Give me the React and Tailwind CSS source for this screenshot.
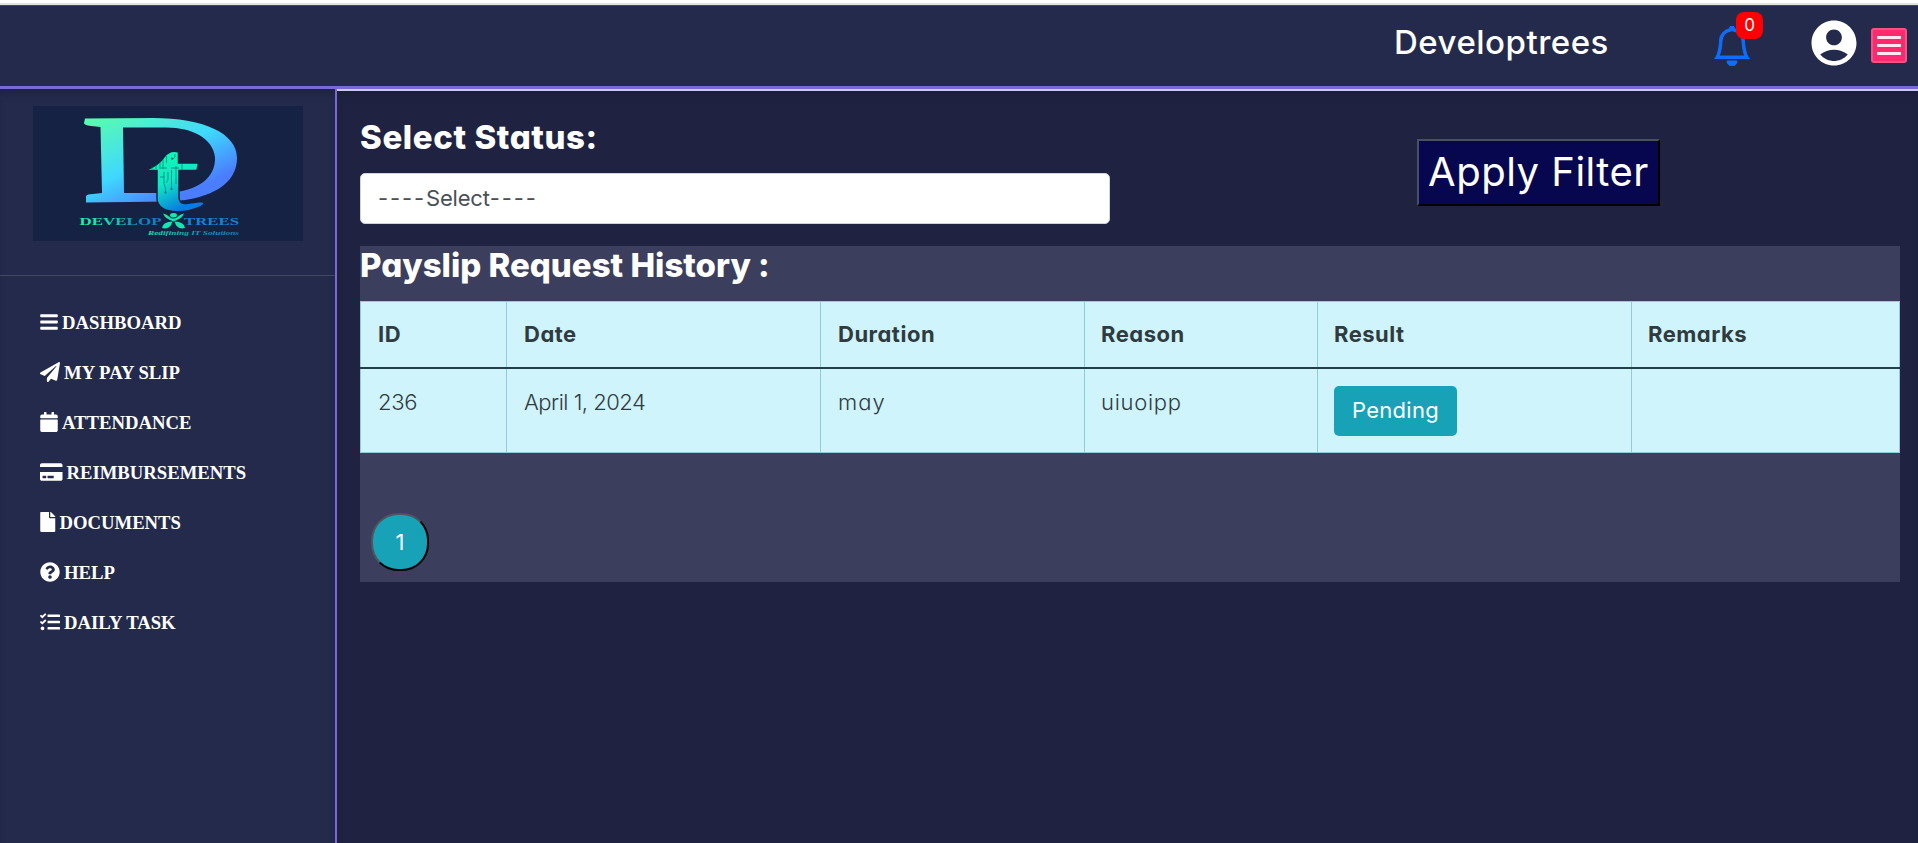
import { FaBars, FaPaperPlane, FaCalendar, FaCreditCard, FaFile, FaQuestionCircle, FaTasks } from "react-icons/fa";
import { BsBell } from "react-icons/bs";
import { MdAccountCircle } from "react-icons/md";

const MENU = [
  { icon: FaBars, label: "Dashboard", size: "w-[18px]" },
  { icon: FaPaperPlane, label: "My Pay Slip", size: "w-5" },
  { icon: FaCalendar, label: "Attendance", size: "w-[18px]" },
  { icon: FaCreditCard, label: "Reimbursements", size: "w-[22.5px]" },
  { icon: FaFile, label: "Documents", size: "w-[15.5px]" },
  { icon: FaQuestionCircle, label: "Help", size: "w-5" },
  { icon: FaTasks, label: "Daily Task", size: "w-5" },
];

function Logo() {
  return (
    <svg viewBox="0 0 270 135" className="h-[135px] w-[270px]">
      <defs>
        <linearGradient id="dGrad" x1="0" y1="0" x2="0.85" y2="1">
          <stop offset="0" stopColor="#5affa8" />
          <stop offset="0.5" stopColor="#3fd8ff" />
          <stop offset="0.85" stopColor="#4a7dff" />
          <stop offset="1" stopColor="#4a7dff" />
        </linearGradient>
        <linearGradient id="tGrad" x1="0" y1="0" x2="0.5" y2="1">
          <stop offset="0" stopColor="#10ffb0" />
          <stop offset="0.55" stopColor="#0fe8c4" />
          <stop offset="1" stopColor="#0a7be0" />
        </linearGradient>
        <linearGradient id="nameGrad" x1="0" y1="0" x2="1" y2="0">
          <stop offset="0" stopColor="#18f5a8" />
          <stop offset="0.4" stopColor="#19d3b0" />
          <stop offset="0.7" stopColor="#1a86b8" />
          <stop offset="1" stopColor="#1a78c0" />
        </linearGradient>
        <linearGradient id="tagGrad" x1="0" y1="0" x2="1" y2="0">
          <stop offset="0" stopColor="#18e8b0" />
          <stop offset="0.5" stopColor="#17a0b4" />
          <stop offset="1" stopColor="#1578b8" />
        </linearGradient>
      </defs>
      <rect width="270" height="135" fill="#152243" />
      <path
        fill="url(#dGrad)"
        fillRule="evenodd"
        d="M52 12.5 L120 12 C170 12 204 27 204 52 C204 77 180 93 137 95.500 L53 96.500 L53 90 Q54 88 60 88 L69 87 L67.500 21 L58 20 Q51 19 51 17 Z M90 21.500 L91 87 L135 87 C165 85 183 72 182 51 C180 32 158 21 132 21.500 Z"
      />
      <path
        fill="url(#tGrad)"
        stroke="#152243"
        strokeWidth="1.500"
        d="M112 64.500 Q126 59 131 51 Q137 43 145.500 46 L145.500 57 L165.500 57 L164 64.500 L146 64.500 L146 91 Q146 98 153 97.500 L168 95.500 Q174 97 168 100.500 C150 109 124 108 124 92 L124 64.500 Z"
      />
      <path
        fill="none"
        stroke="#0c5f6c"
        strokeWidth="0.600"
        d="M119 63 V60 M123 63 V58 M127 63 V56 M130 63 V53 M133.500 57 V50 M139 54 L142 51 V48 M128 62 H134 M138 62 H146 M127 71 H131 M131 66 V78 L132.500 82 V86 M135 66 V74 L133 77 M138.500 64 V82 M143 60 V78 M149 57 V64"
      />
      <circle cx="132.500" cy="86.500" r="0.900" fill="#0c5f6c" />
      <circle cx="138.500" cy="83" r="0.900" fill="#0c5f6c" />
      <circle cx="139" cy="52.500" r="0.900" fill="#0c5f6c" />
      <g fontFamily="'Liberation Serif', serif">
        <text x="46.500" y="119" fontSize="10.500" fontWeight="bold" textLength="82" lengthAdjust="spacingAndGlyphs" fill="url(#nameGrad)">DEVELOP</text>
        <text x="151" y="119" fontSize="10.500" fontWeight="bold" textLength="55" lengthAdjust="spacingAndGlyphs" fill="#1583cc">TREES</text>
        <text x="115" y="128.500" fontSize="6.500" fontStyle="italic" fontWeight="bold" textLength="91" lengthAdjust="spacingAndGlyphs" fill="url(#tagGrad)">Redifining IT Solutions</text>
      </g>
      <g fill="#12e8b4">
        <ellipse cx="140.500" cy="109.200" rx="3.400" ry="2.200" />
        <path d="M130 107.500 Q134 108 136.500 111 Q140.500 114 144.500 111 Q147 108 151 107.500 Q149 112 144 114 L140.500 115.500 L137 114 Q132 112 130 107.500 Z" />
        <path d="M139.500 115.500 Q130 115.500 129 122 Q137 124 139.500 115.500 Z" />
        <path d="M141.500 115.500 Q151 115.500 152 122 Q144 124 141.500 115.500 Z" />
      </g>
    </svg>
  );
}

const HEADERS = [
  { label: "ID", pad: "pl-[17px]" },
  { label: "Date", pad: "pl-[17px]" },
  { label: "Duration", pad: "pl-[17px]" },
  { label: "Reason", pad: "pl-4" },
  { label: "Result", pad: "pl-4" },
  { label: "Remarks", pad: "pl-4" },
];

const CELLS = [
  { value: "236", style: "pl-[17px] tracking-[-0.3px]" },
  { value: "April 1, 2024", style: "pl-[17px] tracking-[-0.5px]" },
  { value: "may", style: "pl-[17px] tracking-[1px]" },
  { value: "uiuoipp", style: "pl-4 tracking-[0.7px]" },
];

export default function App() {
  return (
    <div className="flex h-[843px] w-[1918px] flex-col overflow-hidden bg-[#1f2341] font-['Inter',sans-serif] text-white [font-feature-settings:'cv11']">
      <div className="h-[3px] shrink-0 bg-white" />
      <div className="h-[2px] shrink-0 bg-[#dfe2df]" />
      <header className="flex h-[84px] shrink-0 items-start border-t border-b-[3px] border-t-[#3d4a57] border-b-[#7a68d6] bg-[#242a4b]">
        <div className="ml-[1394px] mt-[16px] w-[320px] whitespace-nowrap text-[33px] leading-[40px] font-medium tracking-[0.5px]">Developtrees</div>
        <div className="relative mt-[20px] w-[97px]">
          <BsBell className="-ml-[2.5px] h-10 w-10 stroke-[#0d6efd] stroke-[0.4] text-[#0d6efd]" preserveAspectRatio="none" />
          <span className="absolute -top-[14px] left-[22px] flex h-[27px] w-[27px] items-center justify-center rounded-[8px] bg-[#ff0000] text-[17px] leading-none">0</span>
        </div>
        <MdAccountCircle className="-ml-[4px] mt-[10px] size-[54px]" />
        <button className="ml-[10px] mt-[22px] flex h-[35px] w-9 flex-col items-center justify-center gap-[5px] rounded-[3px] border-2 border-[#f5508a] bg-[#ff2a6d]">
          <span className="h-[3px] w-6 bg-[#ffe6f0]" />
          <span className="h-[3px] w-6 bg-[#ffe6f0]" />
          <span className="h-[3px] w-6 bg-[#ffe6f0]" />
        </button>
      </header>
      <div className="flex min-h-0 flex-1">
        <aside className="w-[337px] shrink-0 border-r-2 border-[#7a68d6] bg-[#242a4b] shadow-[inset_0_7px_8px_-4px_#1d2142]">
          <div className="h-[187px] border-b border-[#3f4960] pt-[17px] pl-[33px]">
            <Logo />
          </div>
          <nav className="pt-[21px] pl-10 font-['Liberation_Serif',serif]">
            {MENU.map(({ icon: Icon, label, size }) => (
              <a key={label} className="flex h-[50px] items-center gap-1 text-[18.7px] font-bold uppercase">
                <Icon className={`${size} h-5 shrink-0`} />
                <span className="pt-[2px]">{label}</span>
              </a>
            ))}
          </nav>
        </aside>
        <main className="flex min-w-0 flex-1 flex-col border-t-2 border-[#cdcbe4] pl-[23px] shadow-[inset_0_8px_8px_-4px_#1a1e3c]">
          <div className="flex h-[155px]">
            <div className="w-[750px] pt-[25px]">
              <label className="block h-[57px] whitespace-nowrap pt-px text-[33px] leading-[40px] font-extrabold tracking-[0.6px]">Select Status:</label>
              <div className="flex h-[51px] items-center rounded-[5px] border border-[#ced4da] bg-white pl-[17px] text-[22px] text-[#495057]">
                <span className="tracking-[1.9px]">----</span>
                <span className="tracking-[-0.2px]">Select</span>
                <span className="tracking-[1.9px]">----</span>
              </div>
            </div>
            <button className="mt-[48px] ml-[307px] h-[67px] w-[243px] whitespace-nowrap border-2 border-t-[#4b4f66] border-r-black border-b-black border-l-[#4b4f66] bg-[#07074f] pb-[2px] text-[40px] leading-none tracking-[0.5px]">
              Apply Filter
            </button>
          </div>
          <section className="h-[336px] w-[1540px] bg-[#3b3e5c]">
            <h2 className="h-[55px] whitespace-nowrap text-[33px] leading-[38px] font-extrabold tracking-[0px]">Payslip Request History :</h2>
            <table className="w-[1540px] table-fixed border-collapse bg-[#cff4fc] text-[22px] text-[#2f3b3f]">
              <colgroup>
                <col className="w-[146px]" />
                <col className="w-[314px]" />
                <col className="w-[264px]" />
                <col className="w-[233px]" />
                <col className="w-[314px]" />
                <col />
              </colgroup>
              <thead>
                <tr className="h-[66px] border-b-2 border-[#213f49]">
                  {HEADERS.map(({ label, pad }) => (
                    <th key={label} className={`${pad} border-x border-t border-x-[#92cbd9] border-t-[#92cbd9] text-left font-bold tracking-[0.5px]`}>{label}</th>
                  ))}
                </tr>
              </thead>
              <tbody>
                <tr className="h-[85px] align-top">
                  {CELLS.map(({ value, style }) => (
                    <td key={value} className={`${style} border-x border-b border-[#92cbd9] pt-[17px] font-light`}>{value}</td>
                  ))}
                  <td className="border-x border-b border-[#92cbd9] pt-[17px] pl-4">
                    <button className="h-[50px] w-[123px] rounded-[5px] bg-[#17a2b8] tracking-[0.3px] text-white">Pending</button>
                  </td>
                  <td className="border-x border-b border-[#92cbd9]" />
                </tr>
              </tbody>
            </table>
            <button className="mt-[60px] ml-[11px] h-[58px] w-[58px] rounded-[27px] border-2 border-t-[#50545f] border-r-black border-b-black border-l-[#50545f] bg-[#17a2b8] text-[22px]">
              1
            </button>
          </section>
        </main>
      </div>
    </div>
  );
}
